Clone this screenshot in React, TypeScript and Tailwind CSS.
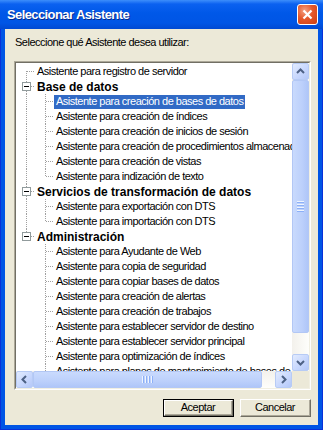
import React from "react";

type Kind = "root" | "child";

interface Row {
    text: string;
    kind: Kind;
    // connector shapes for the two indent columns
    a: "first" | "mid" | "last" | "pass" | "none";
    b?: "mid" | "last";
    box?: boolean;
    selected?: boolean;
}

const rows: Row[] = [
    { text: "Asistente para registro de servidor", kind: "root", a: "first" },
    { text: "Base de datos", kind: "root", a: "mid", box: true },
    { text: "Asistente para creación de bases de datos", kind: "child", a: "pass", b: "mid", selected: true },
    { text: "Asistente para creación de índices", kind: "child", a: "pass", b: "mid" },
    { text: "Asistente para creación de inicios de sesión", kind: "child", a: "pass", b: "mid" },
    { text: "Asistente para creación de procedimientos almacenados", kind: "child", a: "pass", b: "mid" },
    { text: "Asistente para creación de vistas", kind: "child", a: "pass", b: "mid" },
    { text: "Asistente para indización de texto", kind: "child", a: "pass", b: "last" },
    { text: "Servicios de transformación de datos", kind: "root", a: "mid", box: true },
    { text: "Asistente para exportación con DTS", kind: "child", a: "pass", b: "mid" },
    { text: "Asistente para importación con DTS", kind: "child", a: "pass", b: "last" },
    { text: "Administración", kind: "root", a: "last", box: true },
    { text: "Asistente para Ayudante de Web", kind: "child", a: "none", b: "mid" },
    { text: "Asistente para copia de seguridad", kind: "child", a: "none", b: "mid" },
    { text: "Asistente para copiar bases de datos", kind: "child", a: "none", b: "mid" },
    { text: "Asistente para creación de alertas", kind: "child", a: "none", b: "mid" },
    { text: "Asistente para creación de trabajos", kind: "child", a: "none", b: "mid" },
    { text: "Asistente para establecer servidor de destino", kind: "child", a: "none", b: "mid" },
    { text: "Asistente para establecer servidor principal", kind: "child", a: "none", b: "mid" },
    { text: "Asistente para optimización de índices", kind: "child", a: "none", b: "mid" },
    { text: "Asistente para planes de mantenimiento de bases de datos", kind: "child", a: "none", b: "mid" },
    { text: "Asistente para replicación", kind: "child", a: "none", b: "mid" },
];

const dot = { stroke: "#A0A0A0", strokeWidth: 1, strokeDasharray: "1 1", shapeRendering: "crispEdges" as const };

const Connector = ({ shape, box }: { shape: string; box?: boolean }) => (
    <svg width="19" height="15" className="shrink-0">
        {(shape === "mid" || shape === "pass" || shape === "last") && (
            <line x1="10.5" y1="0" x2="10.5" y2={shape === "last" ? 7.5 : 15} {...dot} />
        )}
        {shape === "first" && <line x1="10.5" y1="7" x2="10.5" y2="15" {...dot} />}
        {shape !== "pass" && shape !== "none" && <line x1="11" y1="7.5" x2="19" y2="7.5" {...dot} />}
        {box && (
            <g shapeRendering="crispEdges">
                <rect x="6.5" y="3.5" width="8" height="8" fill="#fff" stroke="#919B9C" />
                <line x1="8" y1="7.5" x2="13" y2="7.5" stroke="#000" />
            </g>
        )}
    </svg>
);

const Chevron = ({ dir }: { dir: "up" | "down" | "left" | "right" }) => {
    const d = {
        up: "M1 5 L4.5 1.5 L8 5",
        down: "M1 2 L4.5 5.5 L8 2",
        left: "M5 1 L1.5 4.5 L5 8",
        right: "M2 1 L5.5 4.5 L2 8",
    }[dir];
    const vertical = dir === "up" || dir === "down";
    return (
        <svg width={vertical ? 9 : 7} height={vertical ? 7 : 9}>
            <path d={d} fill="none" stroke="#4D6185" strokeWidth="2" />
        </svg>
    );
};

const ArrowButton = ({ dir }: { dir: "up" | "down" | "left" | "right" }) => (
    <div className="w-[17px] h-[17px] shrink-0 flex items-center justify-center rounded-[2px] border border-[#B7CBF5] bg-[linear-gradient(135deg,#E2EBFE_0%,#C6D6FD_60%,#B4C8F8_100%)]">
        <Chevron dir={dir} />
    </div>
);

const Grip = ({ vertical }: { vertical: boolean }) => (
    <div className={vertical ? "flex flex-col gap-[1px]" : "flex gap-[1px]"}>
        {[0, 1, 2, 3].map((i) => (
            <div
                key={i}
                className={
                    vertical
                        ? "w-[7px] h-[1px] bg-[#EEF4FE] border-b border-[#8CB0F8] box-content"
                        : "h-[7px] w-[1px] bg-[#EEF4FE] border-r border-[#8CB0F8] box-content"
                }
            />
        ))}
    </div>
);

const Btn = ({ label, primary }: { label: string; primary?: boolean }) => (
    <div
        className={
            "w-[71px] h-[18px] " +
            (primary ? "border border-black" : "")
        }
    >
        <div className="w-full h-full border-t border-l border-t-white border-l-white border-b border-r border-b-[#716F64] border-r-[#716F64]">
            <div className="w-full h-full flex items-center justify-center border-b border-r border-b-[#ACA899] border-r-[#ACA899] text-[11px] tracking-[-0.5px] text-black">
                {label}
            </div>
        </div>
    </div>
);

export default function App() {
    return (
        <div
            className="w-[323px] h-[430px] flex flex-col bg-[#0055E5] select-none"
            style={{ fontFamily: '"Liberation Sans", Arial, sans-serif' }}
        >
            {/* title bar */}
            <div className="h-[29px] shrink-0 flex items-center pl-[7px] pr-[5px] bg-[linear-gradient(to_bottom,#3D8EFB_0%,#0B61F0_14%,#0058E8_45%,#0055E5_80%,#0049D2_100%)]">
                <span className="text-white font-bold text-[13px] tracking-[-0.6px] [text-shadow:1px_1px_0_#0A2A8A]">
                    Seleccionar Asistente
                </span>
                <div className="flex-1" />
                <div className="w-[21px] h-[21px] rounded-[3px] border border-white flex items-center justify-center bg-[radial-gradient(circle_at_35%_30%,#F4A183_0%,#E5582C_45%,#CC3E12_100%)]">
                    <svg width="11" height="11">
                        <path d="M1.5 1.5 L9.5 9.5 M9.5 1.5 L1.5 9.5" stroke="#fff" strokeWidth="2.2" />
                    </svg>
                </div>
            </div>

            {/* client */}
            <div className="flex-1 flex px-[4px] pb-[4px] border-l border-r border-b border-[#0831D9]">
                <div className="flex-1 bg-[#ECE9D8] flex flex-col">
                    <div className="mt-[7px] ml-[10px] h-[13px] leading-[13px] text-[11px] tracking-[-0.5px] text-black">
                        Seleccione qué Asistente desea utilizar:
                    </div>

                    {/* tree box */}
                    <div className="mt-[12px] ml-[9px] w-[297px] h-[329px] border-t border-l border-t-[#ACA899] border-l-[#ACA899] border-b border-r border-b-white border-r-white">
                        <div className="w-full h-full border-t border-l border-t-[#716F64] border-l-[#716F64] border-b border-r border-b-[#F1EFE2] border-r-[#F1EFE2] bg-white flex flex-col">
                            <div className="flex flex-1 min-h-0">
                                <div className="flex-1 min-w-0 overflow-hidden pt-[1px]">
                                    {rows.map((r, i) => (
                                        <div key={i} className="h-[15px] flex items-center whitespace-nowrap">
                                            <Connector shape={r.a} box={r.box} />
                                            {r.kind === "child" && <Connector shape={r.b!} />}
                                            <span
                                                className={
                                                    "px-[2px] h-[14px] flex items-center " +
                                                    (r.box
                                                        ? "font-bold text-[12px] text-black"
                                                        : "text-[11px] tracking-[-0.5px] ") +
                                                    (r.selected ? "bg-[#316AC5] text-white" : !r.box ? "text-black" : "")
                                                }
                                            >
                                                {r.text}
                                            </span>
                                        </div>
                                    ))}
                                </div>
                                {/* vertical scrollbar */}
                                <div className="w-[17px] shrink-0 flex flex-col bg-[linear-gradient(to_right,#F3F1EC,#FEFEFB)]">
                                    <ArrowButton dir="up" />
                                    <div className="h-[253px] shrink-0 rounded-[2px] border border-[#B2C7F5] bg-[linear-gradient(to_right,#C9DAFD,#BCD0FB_60%,#AFC6F8)] flex items-center justify-center">
                                        <Grip vertical />
                                    </div>
                                    <div className="flex-1" />
                                    <ArrowButton dir="down" />
                                </div>
                            </div>
                            {/* horizontal scrollbar */}
                            <div className="h-[17px] shrink-0 flex bg-[linear-gradient(to_bottom,#F3F1EC,#FEFEFB)]">
                                <ArrowButton dir="left" />
                                <div className="w-[229px] shrink-0 rounded-[2px] border border-[#B2C7F5] bg-[linear-gradient(to_bottom,#C9DAFD,#BCD0FB_60%,#AFC6F8)] flex items-center justify-center">
                                    <Grip vertical={false} />
                                </div>
                                <div className="flex-1" />
                                <ArrowButton dir="right" />
                                <div className="w-[17px] shrink-0 bg-[#ECE9D8]" />
                            </div>
                        </div>
                    </div>

                    {/* buttons */}
                    <div className="mt-[9px] mr-[7px] flex justify-end gap-[6px]">
                        <Btn label="Aceptar" primary />
                        <Btn label="Cancelar" />
                    </div>
                </div>
            </div>
        </div>
    );
}
